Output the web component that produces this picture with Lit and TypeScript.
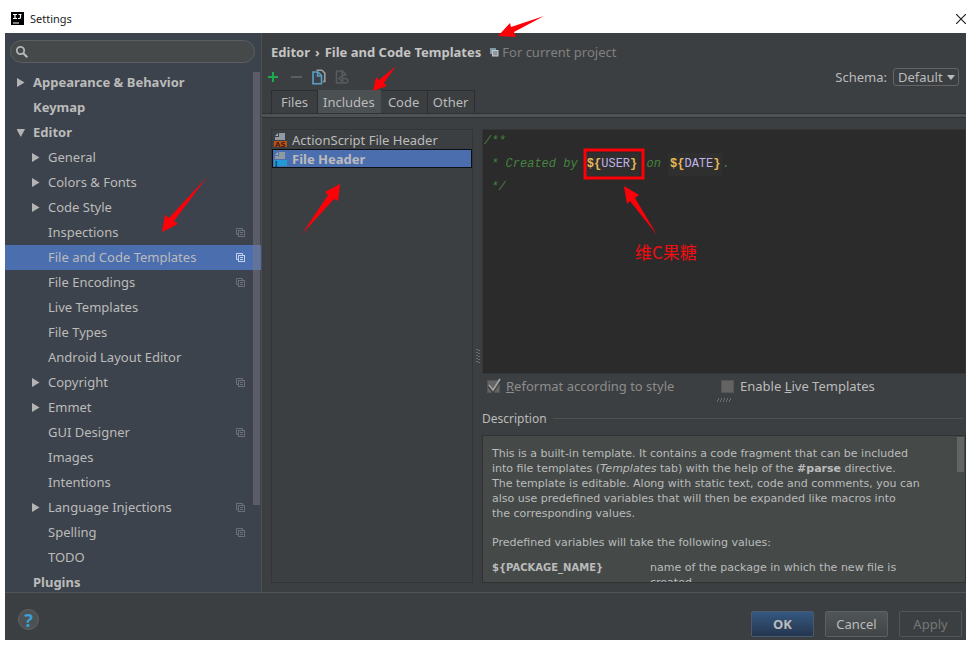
import { LitElement, html, svg, css } from "lit";
import { customElement, state } from "lit/decorators.js";
import { classMap } from "lit/directives/class-map.js";

interface TreeItem {
  label: string;
  level: 0 | 1;
  arrow?: "open" | "closed";
  project?: boolean;
}

const TREE: TreeItem[] = [
  { label: "Appearance & Behavior", level: 0, arrow: "closed" },
  { label: "Keymap", level: 0 },
  { label: "Editor", level: 0, arrow: "open" },
  { label: "General", level: 1, arrow: "closed" },
  { label: "Colors & Fonts", level: 1, arrow: "closed" },
  { label: "Code Style", level: 1, arrow: "closed" },
  { label: "Inspections", level: 1, project: true },
  { label: "File and Code Templates", level: 1, project: true },
  { label: "File Encodings", level: 1, project: true },
  { label: "Live Templates", level: 1 },
  { label: "File Types", level: 1 },
  { label: "Android Layout Editor", level: 1 },
  { label: "Copyright", level: 1, arrow: "closed", project: true },
  { label: "Emmet", level: 1, arrow: "closed" },
  { label: "GUI Designer", level: 1, project: true },
  { label: "Images", level: 1 },
  { label: "Intentions", level: 1 },
  { label: "Language Injections", level: 1, arrow: "closed", project: true },
  { label: "Spelling", level: 1, project: true },
  { label: "TODO", level: 1 },
  { label: "Plugins", level: 0 },
];

const TABS = ["Files", "Includes", "Code", "Other"];

const projectIcon = html`<svg class="project" width="9" height="9" viewBox="0 0 9 9" aria-hidden="true">
  <path d="M2.5 6.500H.5V.5H6.500V2" fill="none" stroke="currentColor" />
  <rect x="2.500" y="2.500" width="6" height="6" fill="none" stroke="currentColor" />
  <path d="M4 4.500h3M4 6.500h3" stroke="currentColor" />
</svg>`;

const fileIcon = (label: string, fill: string, ink: string) => html`<svg class="file" width="15" height="16" viewBox="0 0 15 16" aria-hidden="true">
  <path d="M6 1h6v7H2V5h4z" fill="#8f9aa3" />
  <path d="M5 1v3H2z" fill="#a4afb8" />
  <rect x="1" y="9" width="13" height="6" fill=${fill} />
  ${svg`<text x="2" y="15" font-size="7" font-weight="700" font-family="DejaVu Sans, sans-serif" fill=${ink}>${label}</text>`}
</svg>`;

@customElement("app-root")
export class AppRoot extends LitElement {
  @state() private page = "File and Code Templates";
  @state() private tab = "Includes";
  @state() private template = "File Header";

  static styles = css`
    :host {
      display: flex;
      flex-direction: column;
      position: relative;
      box-sizing: border-box;
      height: 100vh;
      min-height: 560px;
      padding: 0 7px 7px 5px;
      background: #fff;
      color: #bbbbbb;
      font: 13px/20px "Noto Sans", "Open Sans", sans-serif;
      overflow: hidden;
    }
    * { box-sizing: border-box; }
    button, input, select { font: inherit; color: inherit; margin: 0; }
    button { background: none; border: 0; padding: 0; }
    ul { list-style: none; margin: 0; padding: 0; }

    .titlebar {
      flex: none;
      display: flex;
      align-items: center;
      gap: 6px;
      height: 33px;
      padding: 4px 0 0 6px;
      color: #222;
      font-size: 11px;
    }
    .titlebar h1 { flex: 1; margin: 0; font: inherit; }
    .close { width: 10px; height: 10px; display: flex; }

    .body { flex: 1; min-height: 0; display: flex; background: #3c3f41; }

    .sidebar {
      flex: none;
      display: flex;
      flex-direction: column;
      position: relative;
      width: 257px;
      background: #3d434c;
      border-right: 1px solid #4f4e4f;
      overflow: hidden;
    }
    .search {
      flex: none;
      display: flex;
      align-items: center;
      height: 23px;
      margin: 7px 6px 7px 5px;
      padding: 0 4px;
      background: #45494a;
      border: 1px solid #5b5f61;
      border-radius: 12px;
    }
    .search input { flex: 1; min-width: 0; height: 20px; border: 0; padding: 0 4px; background: none; outline: none; }
    .row {
      display: flex;
      align-items: center;
      width: 100%;
      height: 25px;
      padding: 0 16px 1px 10px;
      text-align: left;
      white-space: nowrap;
    }
    .row.child { padding-left: 25px; }
    .row.top { font-weight: 700; }
    .row.selected { background: #4b6eaf; }
    .arrow { flex: none; width: 18px; padding-left: 2px; display: flex; }
    .row .label { flex: 1; }
    .row .project { color: #6b7076; }
    .row.selected .project { color: #c3d2ee; }
    .thumb { position: absolute; right: 1px; top: 39px; width: 7px; height: 433px; background: rgba(125, 120, 135, 0.5); }

    .main { flex: 1; min-width: 0; display: flex; flex-direction: column; }
    .crumbs { display: flex; align-items: center; gap: 5px; height: 20px; margin: 9px 0 0 9px; white-space: nowrap; }
    .crumbs b { color: #c4c4c4; }
    .crumbs .scope { display: flex; align-items: center; gap: 3px; margin-left: 4px; color: #808080; }
    .tools { display: flex; align-items: center; justify-content: space-between; height: 28px; padding: 2px 7px 0 3px; }
    .actions { display: flex; gap: 8px; }
    .actions button { width: 15px; height: 16px; display: flex; align-items: center; justify-content: center; }
    .schema { display: flex; align-items: center; gap: 6px; }
    .pick { position: relative; display: flex; align-items: center; }
    .pick select {
      appearance: none;
      width: 66px;
      height: 18px;
      padding: 0 0 0 4px;
      line-height: 16px;
      background: #3c3f41;
      border: 1px solid #646464;
      border-radius: 3px;
    }
    .pick svg { position: absolute; right: 4px; pointer-events: none; }
    .tabs { display: flex; margin-left: 9px; }
    .tabs button {
      height: 23px;
      padding: 0 5px;
      min-width: 47px;
      border: 1px solid #2c2e2f;
      border-bottom: 0;
      border-left-width: 0;
    }
    .tabs button:first-child { border-left-width: 1px; }
    .tabs button.on { background: #4b5052; border-color: #4b5052; }
    .band { flex: none; height: 5px; background: #4e5254; border: solid #2e3032; border-width: 1px 0; }

    .panes { flex: 1; min-height: 0; display: flex; padding: 11px 0 9px 9px; }
    .list { flex: none; width: 202px; border: 1px solid #323435; }
    .list button {
      display: flex;
      align-items: center;
      gap: 4px;
      width: 100%;
      height: 19px;
      border: 1px solid transparent;
      white-space: nowrap;
    }
    .list button.on { background: #4b6eaf; border-color: #0c0f16; font-weight: 700; }
    .grip { flex: none; width: 9px; display: flex; align-items: center; justify-content: center; }
    .right { flex: 1; min-width: 0; display: flex; flex-direction: column; }
    .editor {
      flex: 1;
      min-height: 0;
      padding: 0 1px;
      background: #2b2b2b;
      border: 1px solid #333536;
      font: italic 12px/23px "Liberation Mono", monospace;
      color: #45833f;
      white-space: pre;
      overflow: hidden;
    }
    .line { display: flex; height: 23px; }
    .var { display: flex; padding: 0 2px; background: #2f2f30; font-style: normal; color: #c0b4e6; }
    .var b { color: #e8ba56; }
    .checks { flex: none; display: flex; height: 24px; align-items: center; padding-left: 5px; }
    .checks label { display: flex; align-items: center; gap: 6px; white-space: nowrap; }
    .checks label:first-child { width: 234px; color: #8c8c8c; }
    .checks input {
      appearance: none;
      width: 13px;
      height: 13px;
      background: #636363;
      border: 1px solid #555;
    }
    .box { display: flex; position: relative; }
    .box svg { position: absolute; left: 0; top: 0; pointer-events: none; }
    .hgrip { flex: none; display: flex; justify-content: center; height: 4px; }
    .legend { flex: none; display: flex; align-items: center; gap: 6px; height: 33px; padding-right: 3px; font-size: 12px; }
    .legend::after { content: ""; flex: 1; height: 1px; background: #525050; }
    .legend h2 { margin: 0; font: inherit; }
    .desc {
      flex: none;
      position: relative;
      height: 148px;
      padding: 10px 24px 0 9px;
      background: #454a49;
      border: 1px solid #303233;
      font: 11px/15px "DejaVu Sans", sans-serif;
      overflow: hidden;
    }
    .desc p { margin: 0 0 14px; white-space: nowrap; }
    .desc dl { display: grid; grid-template-columns: 158px 1fr; margin: -4px 0 0; }
    .desc dt { font-weight: 700; font-size: 10px; }
    .desc dd { margin: 0; }
    .desc .bar { position: absolute; right: 1px; top: 1px; width: 7px; height: 35px; background: #626465; }

    .footer {
      flex: none;
      display: flex;
      align-items: center;
      gap: 11px;
      height: 48px;
      padding: 14px 4px 0 13px;
      background: #3c3f41;
      border-top: 1px solid #555252;
    }
    .help {
      width: 21px;
      height: 21px;
      margin: -8px auto 0 0;
      border: 1px solid #5f6365;
      border-radius: 50%;
      background: #4c5153;
      color: #3d9fd3;
      font-weight: 700;
      font-size: 18px;
      line-height: 18px;
    }
    .btn { width: 63px; height: 26px; border: 1px solid #5c6062; border-radius: 2px; background: linear-gradient(#505557, #414547); }
    .btn.ok { background: linear-gradient(#365880, #24364f); border-color: #4b5a6e; font-weight: 700; }
    .btn:disabled { background: none; color: #777; border-color: #54575a; }

    .marks { position: absolute; left: 0; top: 0; width: 100%; height: 100%; pointer-events: none; }
    .note {
      position: absolute;
      left: 635px;
      top: 242px;
      color: #f20d12;
      font: 17px/20px "Noto Sans CJK SC", sans-serif;
      white-space: nowrap;
    }
  `;

  private arrow(kind?: "open" | "closed") {
    if (!kind) return html`<span class="arrow"></span>`;
    const d = kind === "open" ? "M-.5 1h8.500L3.800 9z" : "M0 0v9L7.500 4.500z";
    return html`<span class="arrow"><svg width="9" height="9" aria-hidden="true"><path d=${d} fill="#b4b4b4" /></svg></span>`;
  }

  private renderSidebar() {
    return html`<nav class="sidebar" aria-label="Settings categories">
      <div class="search">
        <svg width="14" height="14" viewBox="0 0 14 14" aria-hidden="true">
          <circle cx="5.500" cy="5.500" r="3.700" fill="none" stroke="#b4b6b7" stroke-width="1.800" />
          <path d="M8.300 8.300l4 4" stroke="#b4b6b7" stroke-width="2.200" />
        </svg>
        <input type="text" aria-label="Search settings" />
      </div>
      <ul>
        ${TREE.map(
          (t) => html`<li>
            <button
              class=${classMap({ row: true, top: t.level === 0, child: t.level === 1, selected: t.label === this.page })}
              @click=${() => (this.page = t.label)}
            >${this.arrow(t.arrow)}<span class="label">${t.label}</span>${t.project ? projectIcon : ""}</button>
          </li>`
        )}
      </ul>
      <div class="thumb"></div>
    </nav>`;
  }

  private renderHeader() {
    return html`
      <div class="crumbs">
        <b>Editor</b><b>›</b><b>File and Code Templates</b>
        <span class="scope">
          <svg width="9" height="9" viewBox="0 0 9 9" aria-hidden="true">
            <path d="M0 0h6v2H2v4H0z" fill="#7e98a8" />
            <rect x="2.500" y="2.500" width="5.500" height="5.500" fill="#8d969b" stroke="#c3c7ca" />
          </svg>
          For current project
        </span>
      </div>
      <div class="tools">
        <div class="actions">
          <button aria-label="Add"><svg width="12" height="12"><path d="M6 1v10M1 6h10" stroke="#1ea84f" stroke-width="2" /></svg></button>
          <button aria-label="Remove" disabled><svg width="12" height="12"><path d="M1 6h11" stroke="#5c5e60" stroke-width="2" /></svg></button>
          <button aria-label="Copy">
            <svg width="14" height="16" viewBox="0 0 14 16">
              <path d="M4.500 1.300h5.500l2.800 2.800v8.400h-2" fill="none" stroke="#9b9fa1" stroke-width="1.600" />
              <path d="M1 3h5l3.500 3.500v8.300H1z" fill="#3c4348" stroke="#5b9fc6" stroke-width="1.600" />
              <path d="M5.500 3v4h4" fill="none" stroke="#5b9fc6" stroke-width="1.400" />
            </svg>
          </button>
          <button aria-label="Reset to default" disabled>
            <svg width="14" height="16" viewBox="0 0 14 16">
              <path d="M8 14H1.500V2h6l3 3v2M7 2v4h3.500" fill="none" stroke="#595b5d" stroke-width="1.500" />
              <path d="M7.500 6.500L4 9.500l3.500 3zM7 9.500h3.500a2 2 0 010 4.500H8" fill="#595b5d" fill-opacity="0" stroke="#595b5d" stroke-width="1.500" />
            </svg>
          </button>
        </div>
        <div class="schema">
          <label for="schema">Schema:</label>
          <span class="pick">
            <select id="schema"><option>Default</option></select>
            <svg width="8" height="5" aria-hidden="true"><path d="M0 0h8L4 5z" fill="#bbb" /></svg>
          </span>
        </div>
      </div>
      <div class="tabs" role="tablist">
        ${TABS.map(
          (t) => html`<button role="tab" aria-selected=${t === this.tab} class=${classMap({ on: t === this.tab })} @click=${() => (this.tab = t)}>${t}</button>`
        )}
      </div>
      <div class="band"></div>`;
  }

  private renderTemplate(name: string, icon: unknown) {
    return html`<li>
      <button class=${classMap({ on: name === this.template })} @click=${() => (this.template = name)}>${icon}<span>${name}</span></button>
    </li>`;
  }

  private renderPanes() {
    const variable = (n: string) => html`<span class="var"><b>\${</b><span>${n}</span><b>}</b></span>`;
    return html`<div class="panes">
      <ul class="list">
        ${this.renderTemplate("ActionScript File Header", fileIcon("AS", "#b9531c", "#4a1e0c"))}
        ${this.renderTemplate("File Header", fileIcon("J", "#2299d4", "#0d4670"))}
      </ul>
      <div class="grip">
        <svg width="4" height="14" aria-hidden="true"><path d="M1 0v14M3 1v13" stroke="#97999a" stroke-dasharray="1 2" /></svg>
      </div>
      <div class="right">
        <div class="editor"><div class="line">/**</div><div class="line"><span> * Created by </span>${variable("USER")}<span> on </span>${variable("DATE")}<span>.</span></div><div class="line"> */</div></div>
        <div class="checks">
          <label>
            <span class="box"><input type="checkbox" checked disabled />
              <svg width="13" height="13" overflow="visible" aria-hidden="true"><path d="M2 6l4 5 7-11" fill="none" stroke="#333" stroke-width="3" /><path d="M2 5l4 5 7-11" fill="none" stroke="#a0a0a0" stroke-width="2" /></svg>
            </span>
            <span><u>R</u>eformat according to style</span>
          </label>
          <label><span class="box"><input type="checkbox" /></span><span>Enable <u>L</u>ive Templates</span></label>
        </div>
        <div class="hgrip">
          <svg width="14" height="4" aria-hidden="true"><path d="M0 3h14M1 1h13" stroke="#97999a" stroke-dasharray="1 2" /></svg>
        </div>
        <div class="legend"><h2>Description</h2></div>
        <section class="desc">
          <p>
            This is a built-in template. It contains a code fragment that can be included<br />
            into file templates (<i>Templates</i> tab) with the help of the <b>#parse</b> directive.<br />
            The template is editable. Along with static text, code and comments, you can<br />
            also use predefined variables that will then be expanded like macros into<br />
            the corresponding values.
          </p>
          <p>Predefined variables will take the following values:</p>
          <dl>
            <dt>\${PACKAGE_NAME}</dt>
            <dd>name of the package in which the new file is created</dd>
          </dl>
          <div class="bar"></div>
        </section>
      </div>
    </div>`;
  }

  render() {
    return html`
      <header class="titlebar">
        <svg width="13" height="13" viewBox="0 0 13 13" aria-hidden="true">
          <rect width="13" height="13" fill="#000" />
          <path d="M2 2.500h4M4 2v5M2 6.500h4M7.500 2.500h3M9.500 2v3.500q0 1-1.200 1H7M2 11h6" fill="none" stroke="#fff" stroke-width="1.200" />
        </svg>
        <h1>Settings</h1>
        <button class="close" aria-label="Close">
          <svg width="10" height="10"><path d="M0 0l10 10M10 0L0 10" stroke="#222" stroke-width="1.200" /></svg>
        </button>
      </header>
      <div class="body">
        ${this.renderSidebar()}
        <main class="main">${this.renderHeader()}${this.renderPanes()}</main>
      </div>
      <footer class="footer">
        <button class="help" aria-label="Help">?</button>
        <button class="btn ok">OK</button>
        <button class="btn">Cancel</button>
        <button class="btn" disabled>Apply</button>
      </footer>
      <svg class="marks" aria-hidden="true">
        <g fill="#fe0008">
          <path d="M498 36L510 23L511 27L544 16L514 32L516 37z" />
          <path d="M373 91L376 77L379 80L396 66L384 83L387 86z" />
          <path d="M162 232L165 215L169 218L207 177L174 221L178 224z" />
          <path d="M340 184L325 192L328 195L302 234L334 199L338 201z" />
          <path d="M624 186L639 195L635 198L657 235L630 201L627 204z" />
        </g>
        <rect x="585" y="150" width="58" height="28" fill="none" stroke="#fe0008" stroke-width="3" />
      </svg>
      <span class="note">维C果糖</span>
    `;
  }
}
